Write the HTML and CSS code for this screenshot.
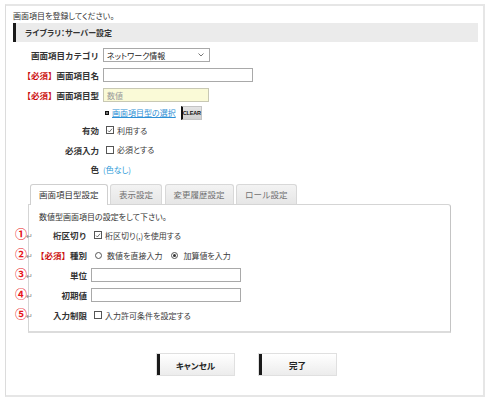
FILE: index.html
```html
<!DOCTYPE html>
<html lang="ja">
<head>
<meta charset="utf-8">
<link rel="stylesheet" href="styles.css">
</head>
<body>
<div class="page">
  <p class="intro">画面項目を登録してください。</p>
  <div class="sec-head">ライブラリ：サーバー設定</div>

  <div class="form">
    <div class="row h20">
      <div class="lbl">画面項目カテゴリ</div>
      <div class="val">
        <div class="select"><span>ネットワーク情報</span><svg width="6" height="4" viewBox="0 0 6 4"><path d="M0.5 0.5 L3 3 L5.5 0.5" fill="none" stroke="#666" stroke-width="0.9"/></svg></div>
      </div>
    </div>
    <div class="row h20">
      <div class="lbl"><span class="req">【必須】</span>画面項目名</div>
      <div class="val"><div class="input w150"></div></div>
    </div>
    <div class="row h20">
      <div class="lbl"><span class="req">【必須】</span>画面項目型</div>
      <div class="val"><div class="input w106 yellow"><span class="ph">数値</span></div></div>
    </div>
    <div class="row h15">
      <div class="lbl"></div>
      <div class="val">
        <span class="sq"></span><a class="link">画面項目型の選択</a><span class="clear">CLEAR</span>
      </div>
    </div>
    <div class="row h20">
      <div class="lbl">有効</div>
      <div class="val chk-val"><span class="cb on"><svg width="7" height="7" viewBox="0 0 7 7"><path d="M1.2 3.6 L2.8 5.2 L5.9 1.4" fill="none" stroke="#444" stroke-width="0.9"/></svg></span><span class="txt">利用する</span></div>
    </div>
    <div class="row h19">
      <div class="lbl">必須入力</div>
      <div class="val chk-val"><span class="cb"></span><span class="txt">必須とする</span></div>
    </div>
    <div class="row h20">
      <div class="lbl">色</div>
      <div class="val"><span class="color">(色なし)</span></div>
    </div>
  </div>

  <div class="tabarea">
    <div class="tabs">
      <div class="tab active">画面項目型設定</div>
      <div class="tab">表示設定</div>
      <div class="tab">変更履歴設定</div>
      <div class="tab">ロール設定</div>
    </div>
    <div class="panel">
      <p class="panel-intro">数値型画面項目の設定をして下さい。</p>
      <div class="prow">
        <span class="mark">①<i>↵</i></span>
        <div class="plbl">桁区切り</div>
        <div class="pval"><span class="cb on"><svg width="7" height="7" viewBox="0 0 7 7"><path d="M1.2 3.6 L2.8 5.2 L5.9 1.4" fill="none" stroke="#444" stroke-width="0.9"/></svg></span><span class="txt">桁区切り(,)を使用する</span></div>
      </div>
      <div class="prow">
        <span class="mark">②<i>↵</i></span>
        <div class="plbl"><span class="req">【必須】</span>種別</div>
        <div class="pval"><span class="rd"></span><span class="txt">数値を直接入力</span><span class="rd on"></span><span class="txt">加算値を入力</span></div>
      </div>
      <div class="prow">
        <span class="mark">③<i>↵</i></span>
        <div class="plbl">単位</div>
        <div class="pval"><div class="input w150"></div></div>
      </div>
      <div class="prow">
        <span class="mark">④<i>↵</i></span>
        <div class="plbl">初期値</div>
        <div class="pval"><div class="input w150"></div></div>
      </div>
      <div class="prow">
        <span class="mark">⑤<i>↵</i></span>
        <div class="plbl">入力制限</div>
        <div class="pval"><span class="cb"></span><span class="txt">入力許可条件を設定する</span></div>
      </div>
    </div>
  </div>

  <div class="buttons">
    <div class="btn">キャンセル</div>
    <div class="btn">完了</div>
  </div>
</div>
</body>
</html>
```
FILE: styles.css
```css
* { box-sizing: border-box; }
html, body { margin: 0; padding: 0; background: #fff; }
body {
  font-family: "Noto Sans CJK JP", "Noto Sans", sans-serif;
  color: #333;
  font-size: 8px;
}
.page {
  margin: 4px 0 0 5px;
  width: 480px;
  height: 393px;
  border: 1px solid #dcdcdc;
  border-top: 2px solid #e6e6e6;
  border-right: 2px solid #e6e6e6;
  border-bottom: 2px solid #e6e6e6;
  padding: 4px 5px 0 7px;
}
.intro {
  margin: 0;
  font-size: 8px;
  line-height: 12px;
  font-feature-settings: "palt";
  color: #333;
}
.sec-head {
  margin-top: 1px;
  height: 19px;
  background: #ebebeb;
  border-left: 3px solid #1a1a1a;
  padding-left: 9px;
  font-weight: bold;
  font-size: 8px;
  line-height: 19px;
  font-feature-settings: "palt";
  color: #333;
}
.form { margin-top: 3px; }
.row { display: flex; align-items: center; }
.h20 { height: 20px; }
.h19 { height: 19px; }
.h15 { height: 15px; }
.lbl {
  width: 86px;
  text-align: right;
  font-weight: bold;
  font-size: 8.5px;
  white-space: nowrap;
  color: #333;
}
.req { color: #cc1111; }
.val { margin-left: 4px; display: flex; align-items: center; }
.select {
  width: 107px;
  height: 14px;
  border: 1px solid #a9a9a9;
  display: flex;
  align-items: center;
  justify-content: space-between;
  padding: 0 5px 0 3px;
  font-size: 8px;
  font-feature-settings: "palt";
  color: #222;
  background: #fff;
}
.input {
  height: 14px;
  border: 1px solid #a9a9a9;
  background: #fff;
  display: flex;
  align-items: center;
  padding-left: 3px;
}
.w150 { width: 150px; }
.w106 { width: 106px; }
.yellow { background: #fafad7; border-color: #c8c8b4; }
.ph { color: #999; font-size: 8px; }
.sq {
  width: 4px; height: 4px;
  border: 1px solid #111;
  background: #777;
  margin-left: 2px;
  margin-right: 3px;
}
.link {
  color: #2d8fd5;
  text-decoration: underline;
  font-size: 8px;
  font-feature-settings: "palt";
}
.clear {
  margin-left: 5px;
  width: 21px;
  height: 14px;
  background: linear-gradient(#e4e4e4, #cfcfcf);
  border: 1px solid #c4c4c4;
  border-left: 2px solid #111;
  font-family: "Liberation Sans", sans-serif;
  font-size: 5.5px;
  font-weight: bold;
  color: #111;
  display: flex;
  align-items: center;
  justify-content: center;
  letter-spacing: -0.2px;
}
.chk-val { margin-left: 7px; }
.cb {
  width: 8px; height: 8px;
  border: 1px solid #555;
  background: #fff;
  display: inline-flex;
  align-items: center;
  justify-content: center;
  flex: none;
}
.txt {
  margin-left: 3px;
  font-size: 8px;
  font-feature-settings: "palt";
  color: #3a3a3a;
}
.color {
  color: #2d9ad8;
  font-size: 8px;
  font-feature-settings: "palt";
}

.tabarea { margin-top: 5px; margin-left: 15px; width: 423px; }
.tabs { display: flex; gap: 2.5px; padding-left: 2px; height: 20px; position: relative; z-index: 1; }
.tab {
  height: 20px;
  padding: 0 8px;
  border: 1px solid #d8d8d8;
  border-bottom: none;
  border-radius: 3px 3px 0 0;
  background: linear-gradient(#f3f3f3, #e6e6e6);
  color: #707070;
  font-size: 8.5px;
  line-height: 19px;
  white-space: nowrap;
}
.tab.active {
  background: #fff;
  color: #333;
  height: 21px;
  border-color: #cfcfcf;
}
.panel {
  height: 129px;
  border: 1px solid #d5d5d5;
  border-right-color: #c4c4c4;
  border-bottom: 2px solid #dcdcdc;
  border-radius: 0 3px 0 0;
  padding: 5px 0 0 6px;
}
.panel-intro {
  margin: 0 0 1px 4px;
  font-size: 8px;
  line-height: 14px;
  font-feature-settings: "palt";
  color: #333;
}
.prow {
  position: relative;
  display: flex;
  align-items: center;
  height: 20px;
}
.mark {
  position: absolute;
  left: -20px;
  top: 2px;
  color: #e8141a;
  font-size: 12px;
  font-weight: bold;
  line-height: 14px;
  white-space: nowrap;
}
.mark i {
  font-style: normal;
  font-weight: normal;
  color: #8a8a8a;
  font-size: 7.5px;
  margin-left: -1px;
}
.plbl {
  width: 52px;
  text-align: right;
  font-weight: bold;
  font-size: 8.5px;
  white-space: nowrap;
  color: #333;
}
.pval { margin-left: 4px; display: flex; align-items: center; }
.pval > .cb { margin-left: 3px; }
.rd {
  width: 7px; height: 7px;
  border: 1px solid #555;
  border-radius: 50%;
  margin-left: 4px;
  flex: none;
  display: inline-flex;
  align-items: center;
  justify-content: center;
}
.rd + .txt { margin-left: 5px; }
.txt + .rd { margin-left: 9px; }
.rd.on::after {
  content: "";
  width: 3px; height: 3px;
  border-radius: 50%;
  background: #333;
}

.buttons {
  margin-top: 20px;
  display: flex;
  justify-content: center;
  gap: 23px;
  padding-left: 2px;
}
.btn {
  width: 79px;
  height: 23px;
  border: 1px solid #e0e0e0;
  background: linear-gradient(#ffffff, #ececec);
  box-shadow: inset 3px 0 0 #1a1a1a;
  font-weight: bold;
  font-size: 8.5px;
  font-feature-settings: "palt";
  color: #222;
  display: flex;
  align-items: center;
  justify-content: center;
}
```
